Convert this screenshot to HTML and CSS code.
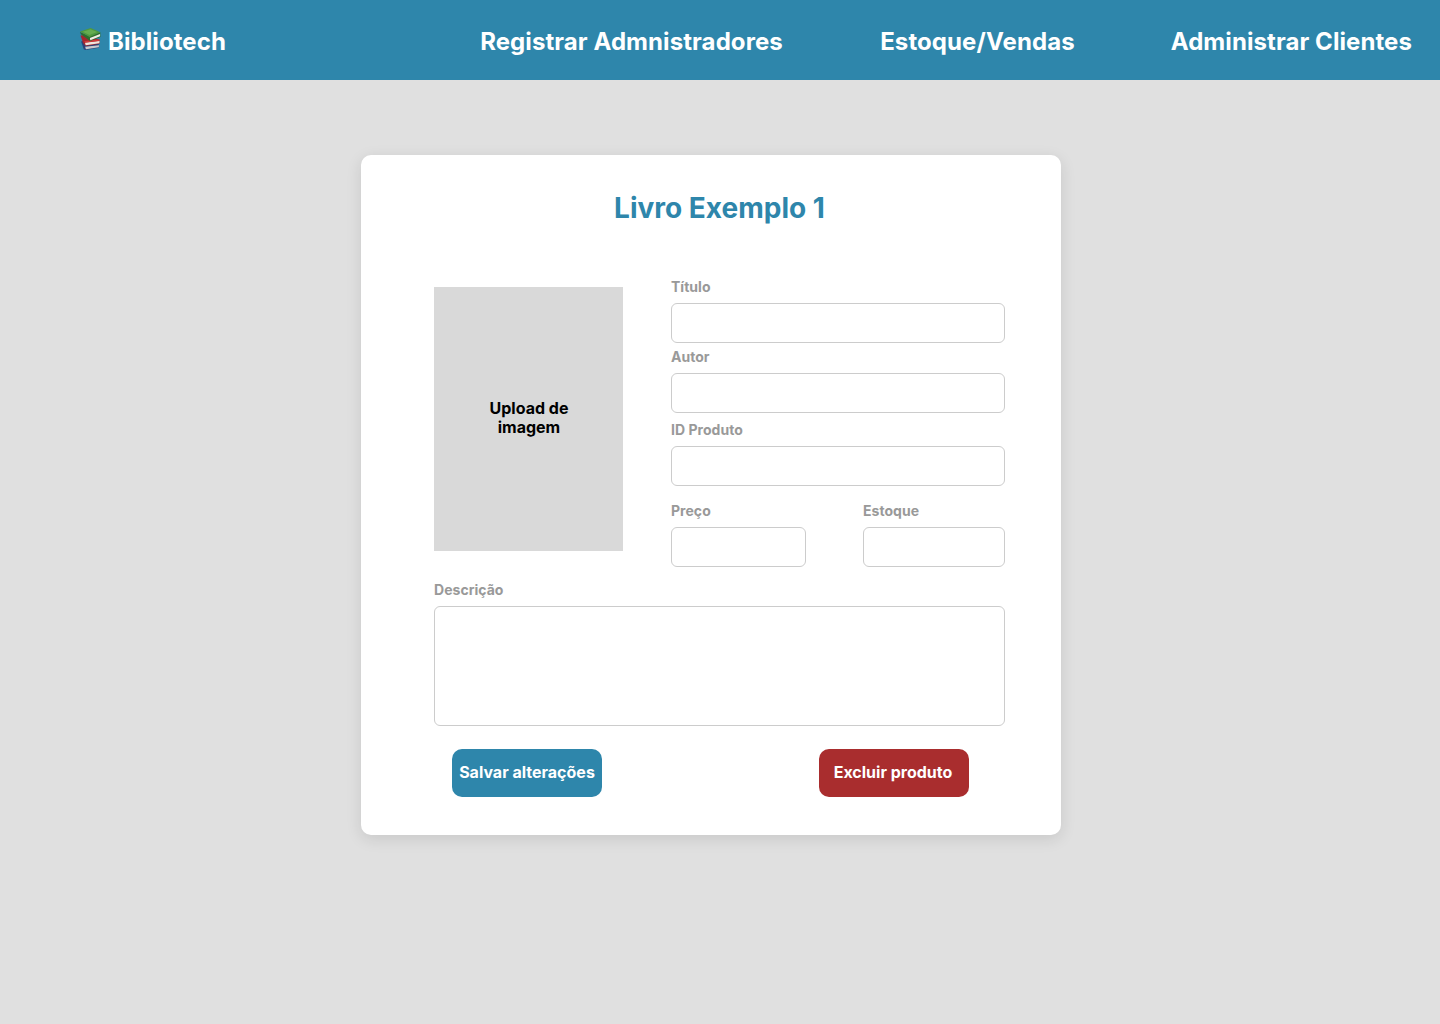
FILE: index.html
```html
<!DOCTYPE html>
<html lang="pt-BR">
<head>
<meta charset="utf-8">
<title>Bibliotech</title>
<link rel="stylesheet" href="styles.css">
</head>
<body>
<header class="topbar">
  <a class="brand">
    <svg class="brand-icon" viewBox="0 0 24 24" aria-hidden="true">
      <path d="M2.2 14.5 4.2 14 20.6 17.2 20.8 21 6.6 23.6 5 22.6Z" fill="#2b4178"/>
      <path d="M6.4 20 20.9 18.4 20.7 20.7 7.2 22.8Z" fill="#c9c8cc"/>
      <path d="M1.6 8.4 4 8.2 21.2 12.4 21.5 17 7 19.2 4.2 16.2Z" fill="#a3272f"/>
      <path d="M6.2 15.9 21.4 14.2 21.2 16.5 7 18.5Z" fill="#efe5dd"/>
      <path d="M5.2 14.3 21.4 12.2 21.5 13.7 6.5 15.6Z" fill="#cf3a3a"/>
      <path d="M1 4.6 2 7 11.4 14.2 22.4 10 22.2 5 11 9Z" fill="#2d6d2d"/>
      <path d="M11.4 10.9 22 6.8 22 9.2 11.8 13.3Z" fill="#f1eee5"/>
      <path d="M1 4.2 12.2 .6 22.4 5 11 9.8Z" fill="#4e993f"/>
      <path d="M4 4.4 12 1.8 19 4.8 10.8 7.9Z" fill="#66ad50"/>
    </svg>
    <span>Bibliotech</span>
  </a>
  <nav class="menu">
    <a class="menu-link">Registrar Admnistradores</a>
    <a class="menu-link">Estoque/Vendas</a>
    <a class="menu-link">Administrar Clientes</a>
  </nav>
</header>
<main class="card">
  <h1 class="title">Livro Exemplo 1</h1>
  <form class="product">
    <div class="details">
      <div class="upload">Upload de<br>imagem</div>
      <div class="fields">
        <label class="field">Título<input class="control" type="text"></label>
        <label class="field field-author">Autor<input class="control" type="text"></label>
        <label class="field field-id">ID Produto<input class="control" type="text"></label>
        <div class="pair">
          <label class="field">Preço<input class="control" type="text"></label>
          <label class="field">Estoque<input class="control" type="text"></label>
        </div>
      </div>
    </div>
    <label class="field field-description">Descrição<textarea class="control description"></textarea></label>
    <div class="actions">
      <button class="button save" type="button">Salvar alterações</button>
      <button class="button delete" type="button">Excluir produto</button>
    </div>
  </form>
</main>
</body>
</html>
```

FILE: styles.css
```css
* {
  box-sizing: border-box;
}

body {
  margin: 0;
  min-height: 1024px;
  background: #e0e0e0;
  font-family: Inter, "Liberation Sans", sans-serif;
  font-weight: 700;
}

.topbar {
  display: flex;
  justify-content: space-between;
  height: 80px;
  padding: 27px 28px 0 79px;
  background: #2e86ab;
  color: #fff;
  font-size: 24px;
  letter-spacing: 0.08px;
  line-height: 29px;
  white-space: nowrap;
}

.brand {
  display: flex;
  gap: 6px;
}

.brand-icon {
  width: 23px;
  height: 24px;
}

.menu {
  display: flex;
  gap: 96px;
}

.menu-link:first-child {
  margin-right: 1.4px;
}

.card {
  width: 700px;
  height: 680px;
  margin: 75px 0 0 361px;
  padding: 36px 56px 38px 73px;
  border-radius: 10px;
  background: #fff;
  box-shadow: 0 4px 16px rgba(0, 0, 0, 0.11);
}

.title {
  margin: 0 0 53px;
  color: #2e86ab;
  font-size: 28px;
  line-height: 34px;
  text-align: center;
}

.details {
  display: grid;
  grid-template-columns: 189px 334px;
  gap: 48px;
}

.upload {
  display: flex;
  align-items: center;
  justify-content: center;
  height: 264px;
  margin-top: 9px;
  padding: 0 0 2px 1px;
  background: #d9d9d9;
  color: #000;
  font-size: 16px;
  line-height: 19px;
  text-align: center;
}

.field {
  display: flex;
  flex-direction: column;
  gap: 8px;
  color: #999;
  font-size: 14px;
  letter-spacing: 0.03px;
  line-height: 17px;
}

.field-author {
  margin-top: 5px;
}

.field-id {
  margin-top: 8px;
}

.pair {
  display: grid;
  grid-template-columns: 135px 142px;
  justify-content: space-between;
  margin-top: 16px;
}

.control {
  display: block;
  width: 100%;
  height: 40px;
  margin: 0;
  padding: 8px 12px;
  border: 1px solid #ccc;
  border-radius: 6px;
  background: #fff;
  font: 400 14px/20px Inter, "Liberation Sans", sans-serif;
}

.field-description {
  margin-top: 14px;
}

.description {
  height: 120px;
  resize: none;
}

.actions {
  display: flex;
  justify-content: space-between;
  margin-top: 23px;
  padding: 0 36px 0 18px;
}

.button {
  width: 150px;
  height: 48px;
  padding: 0 0 2px;
  border: 0;
  border-radius: 10px;
  color: #fff;
  font: 700 16px/19px Inter, "Liberation Sans", sans-serif;
  white-space: nowrap;
}

.save {
  background: #2e86ab;
}

.delete {
  background: #a92d2e;
  padding-right: 2px;
}
```
